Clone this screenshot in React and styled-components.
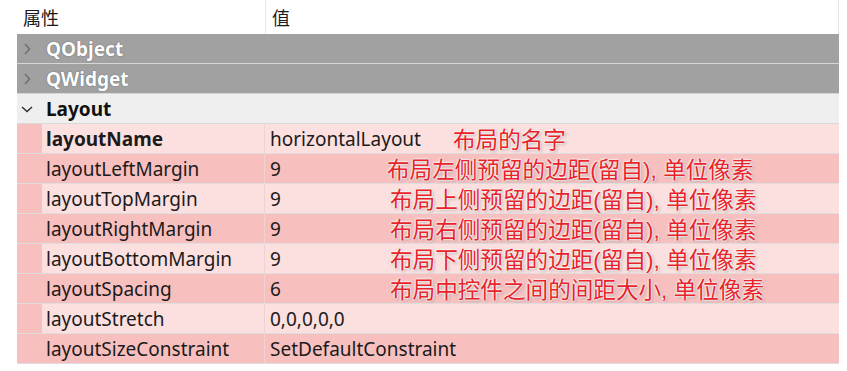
import React from 'react'
import styled, { createGlobalStyle } from 'styled-components'

const GlobalStyle = createGlobalStyle`
  html, body {
    margin: 0;
    padding: 0;
    background: #ffffff;
  }
  body {
    font-family: "Noto Sans", "Noto Sans CJK SC", sans-serif;
  }
`

const groups = [
  { name: 'QObject', open: false },
  { name: 'QWidget', open: false },
]

const props = [
  { name: 'layoutName', value: 'horizontalLayout', bold: true, note: '布局的名字', noteLeft: 436 },
  { name: 'layoutLeftMargin', value: '9', note: '布局左侧预留的边距(留自), 单位像素', noteLeft: 370 },
  { name: 'layoutTopMargin', value: '9', note: '布局上侧预留的边距(留自), 单位像素', noteLeft: 373 },
  { name: 'layoutRightMargin', value: '9', note: '布局右侧预留的边距(留自), 单位像素', noteLeft: 373 },
  { name: 'layoutBottomMargin', value: '9', note: '布局下侧预留的边距(留自), 单位像素', noteLeft: 373 },
  { name: 'layoutSpacing', value: '6', note: '布局中控件之间的间距大小, 单位像素', noteLeft: 373 },
  { name: 'layoutStretch', value: '0,0,0,0,0' },
  { name: 'layoutSizeConstraint', value: 'SetDefaultConstraint' },
]

function Chevron({ open, color }) {
  return (
    <Arrow viewBox="0 0 12 12">
      {open ? (
        <path d="M1 4 L6 8.5 L11 4" fill="none" stroke={color} strokeWidth="1.5" />
      ) : (
        <path d="M4 1 L8.5 6 L4 11" fill="none" stroke={color} strokeWidth="1.5" />
      )}
    </Arrow>
  )
}

export default function App() {
  return (
    <>
      <GlobalStyle />
      <Page>
        <Table>
          <Header>
            <HeaderCell $first>属性</HeaderCell>
            <HeaderCell>值</HeaderCell>
          </Header>
          {groups.map((g) => (
            <GroupRow key={g.name}>
              <Chevron open={g.open} color="#6e6e6e" />
              <GroupTitle>{g.name}</GroupTitle>
            </GroupRow>
          ))}
          <SectionRow>
            <Chevron open color="#333333" />
            <SectionTitle>Layout</SectionTitle>
          </SectionRow>
          {props.map((p, i) => (
            <PropRow key={p.name} $dark={i % 2 === 1}>
              <Gutter />
              <NameCell $bold={p.bold}>{p.name}</NameCell>
              <ValueCell>{p.value}</ValueCell>
              {p.note && <Note style={{ left: p.noteLeft }}>{p.note}</Note>}
            </PropRow>
          ))}
        </Table>
      </Page>
    </>
  )
}

const Page = styled.div`
  width: 847px;
  height: 371px;
  background: #ffffff;
  padding: 0 8px 0 17px;
  box-sizing: border-box;
`

const Table = styled.div`
  width: 822px;
  display: flex;
  flex-direction: column;
`

const Header = styled.div`
  display: grid;
  grid-template-columns: 248px 1fr;
  height: 34px;
  background: #ffffff;
  border-right: 1px solid #e4e4e4;
`

const HeaderCell = styled.div`
  display: flex;
  align-items: center;
  font-size: 18px;
  color: #1a1a1a;
  padding-left: 6px;
  border-left: ${(p) => (p.$first ? 'none' : '1px solid #e8e8e8')};
  font-family: "Noto Sans CJK SC", sans-serif;
`

const Arrow = styled.svg`
  width: 12px;
  height: 12px;
  margin: 0 13px 0 4px;
  flex: none;
`

const GroupRow = styled.div`
  display: flex;
  align-items: center;
  height: 29px;
  background: #a1a1a1;
  border-bottom: 1px solid #d6d6d6;
`

const GroupTitle = styled.span`
  font-size: 19px;
  font-weight: 700;
  color: #ffffff;
  text-shadow: 0 0 1px #6a6a6a, 0 0 1px #6a6a6a;
`

const SectionRow = styled.div`
  display: flex;
  align-items: center;
  height: 29px;
  background: #efefef;
  border-bottom: 1px solid #dadada;
`

const SectionTitle = styled.span`
  font-size: 19px;
  font-weight: 700;
  color: #111111;
`

const PropRow = styled.div`
  position: relative;
  display: grid;
  grid-template-columns: 25px 223px 1fr;
  height: 29px;
  background: ${(p) => (p.$dark ? '#f8bfbf' : '#fcdfdf')};
  border-bottom: 1px solid #dedede;
`

const Gutter = styled.div`
  background: #f8bfbf;
`

const NameCell = styled.div`
  display: flex;
  align-items: center;
  padding-left: 4px;
  font-size: 19px;
  font-weight: ${(p) => (p.$bold ? 700 : 400)};
  color: #1b1b1b;
  border-right: 1px solid #efd3d3;
`

const ValueCell = styled.div`
  display: flex;
  align-items: center;
  padding-left: 5px;
  font-size: 19px;
  color: #1b1b1b;
`

const Note = styled.span`
  position: absolute;
  top: 0;
  height: 29px;
  display: flex;
  align-items: center;
  font-family: "Liberation Sans", "Noto Sans CJK SC", sans-serif;
  font-size: 22.6px;
  color: #e8232a;
  white-space: nowrap;
  text-shadow: 0 0 2px #ffffff, 0 0 2px #ffffff, 0 0 3px #ffffff, 1px 1px 3px #8a8a8a;
`
